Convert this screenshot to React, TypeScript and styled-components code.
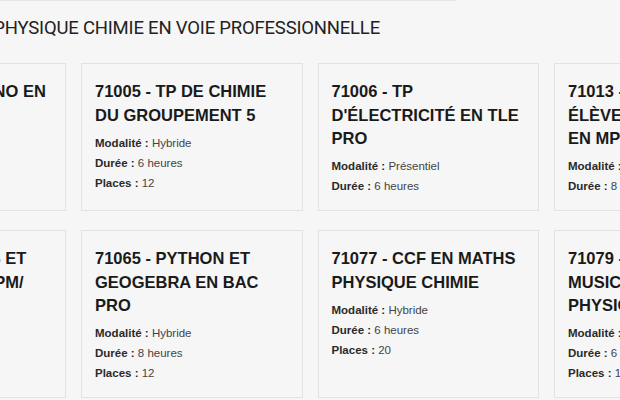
import React from "react";
import styled, { createGlobalStyle } from "styled-components";

type Course = {
  title: string;
  modalite?: string;
  duree?: string;
  places?: string;
};

const rows: Course[][] = [
  [
    { title: "71002 - MA TECHNO EN BAC PRO", modalite: "Hybride", duree: "6 heures", places: "12" },
    { title: "71005 - TP DE CHIMIE DU GROUPEMENT 5", modalite: "Hybride", duree: "6 heures", places: "12" },
    { title: "71006 - TP D'ÉLECTRICITÉ EN TLE PRO", modalite: "Présentiel", duree: "6 heures" },
    { title: "71013 - RENDRE LES ÉLÈVES AUTONOMES EN MPC", modalite: "Hybride", duree: "8 heures" },
  ],
  [
    { title: "71052 - MESURES ET INCERTITUDES 3PM/ BAC PRO", modalite: "Hybride", duree: "6 heures", places: "12" },
    { title: "71065 - PYTHON ET GEOGEBRA EN BAC PRO", modalite: "Hybride", duree: "8 heures", places: "12" },
    { title: "71077 - CCF EN MATHS PHYSIQUE CHIMIE", modalite: "Hybride", duree: "6 heures", places: "20" },
    { title: "71079 - SCIENCES ET MUSICOLOGIE EN PHYSIQUE CHIMIE", modalite: "Hybride", duree: "6 heures", places: "16" },
  ],
];

const GlobalStyle = createGlobalStyle`
  html, body {
    margin: 0;
    padding: 0;
    background: #f6f6f6;
    overflow: hidden;
  }
  body {
    width: 620px;
    height: 400px;
    font-family: "Liberation Sans", Arial, sans-serif;
  }
`;

const Page = styled.main`
  width: 620px;
  height: 400px;
  overflow: hidden;
`;

// the page is scrolled sideways: the content starts left of the window
const Scroller = styled.div`
  margin-left: -155.5px;
  width: 931px;
`;

const TopRule = styled.div`
  width: 611px;
  border-top: 1px solid #e6e6e6;
`;

const Heading = styled.h1`
  margin: 15px 0 0 83px;
  font-family: Roboto, "Liberation Sans", sans-serif;
  font-size: 18.5px;
  letter-spacing: -0.2px;
  line-height: 24px;
  font-weight: 400;
  color: #222;
  white-space: nowrap;
`;

const Grid = styled.section`
  margin-top: 23px;
  display: grid;
  grid-template-columns: repeat(4, 221.5px);
  column-gap: 15px;
  row-gap: 19px;
`;

const Card = styled.article`
  box-sizing: border-box;
  border: 1px solid #e2e2e2;
  background: #f6f6f6;
  padding: 16px 13px 14px;
`;

const Title = styled.h2`
  margin: 0 0 5.5px;
  font-size: 16.5px;
  line-height: 23.5px;
  font-weight: 700;
  color: #1a1a1a;
`;

const Info = styled.p`
  margin: 0;
  font-size: 11.5px;
  line-height: 20px;
  color: #444;
  white-space: nowrap;

  b {
    color: #2a2a2a;
  }
`;

const CourseCard = ({ course }: { course: Course }) => (
  <Card>
    <Title>{course.title}</Title>
    {course.modalite && (
      <Info>
        <b>Modalité :</b> {course.modalite}
      </Info>
    )}
    {course.duree && (
      <Info>
        <b>Durée :</b> {course.duree}
      </Info>
    )}
    {course.places && (
      <Info>
        <b>Places :</b> {course.places}
      </Info>
    )}
  </Card>
);

export default function App() {
  return (
    <Page>
      <GlobalStyle />
      <Scroller>
        <TopRule />
        <Heading>MATHS PHYSIQUE CHIMIE EN VOIE PROFESSIONNELLE</Heading>
        <Grid>
          {rows.flat().map((c) => (
            <CourseCard key={c.title} course={c} />
          ))}
        </Grid>
      </Scroller>
    </Page>
  );
}
